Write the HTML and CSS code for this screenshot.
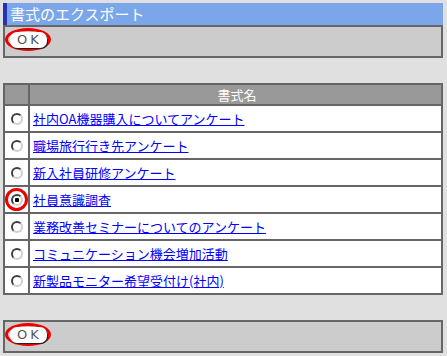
FILE: index.html
```html
<!DOCTYPE html>
<html lang="ja">
<head>
    <meta charset="UTF-8">
    <title>書式のエクスポート</title>
    <link rel="stylesheet" href="styles.css">
</head>
<body>

<div class="titleBar">書式のエクスポート</div>

<div class="okBox">
    <span class="mark markButton"><button type="button" class="okButton">OK</button></span>
</div>

<table class="formList">
    <tr>
        <th class="colRadio"></th>
        <th>書式名</th>
    </tr>
    <tr>
        <td class="colRadio"><span class="mark markNone"><input type="radio" name="fmt"></span></td>
        <td><a href="#">社内OA機器購入についてアンケート</a></td>
    </tr>
    <tr>
        <td class="colRadio"><span class="mark markNone"><input type="radio" name="fmt"></span></td>
        <td><a href="#">職場旅行行き先アンケート</a></td>
    </tr>
    <tr>
        <td class="colRadio"><span class="mark markNone"><input type="radio" name="fmt"></span></td>
        <td><a href="#">新入社員研修アンケート</a></td>
    </tr>
    <tr>
        <td class="colRadio"><span class="mark markRadio"><input type="radio" name="fmt" checked></span></td>
        <td><a href="#">社員意識調査</a></td>
    </tr>
    <tr>
        <td class="colRadio"><span class="mark markNone"><input type="radio" name="fmt"></span></td>
        <td><a href="#">業務改善セミナーについてのアンケート</a></td>
    </tr>
    <tr>
        <td class="colRadio"><span class="mark markNone"><input type="radio" name="fmt"></span></td>
        <td><a href="#">コミュニケーション機会増加活動</a></td>
    </tr>
    <tr>
        <td class="colRadio"><span class="mark markNone"><input type="radio" name="fmt"></span></td>
        <td><a href="#">新製品モニター希望受付け(社内)</a></td>
    </tr>
</table>

<div class="okBox">
    <span class="mark markButton"><button type="button" class="okButton">OK</button></span>
</div>

</body>
</html>
```

FILE: styles.css
```css
body {
    margin: 3px 4px 0 3px;
    background-color: #e0e0e0;
    font-family: "Noto Sans CJK JP", "Noto Sans", sans-serif;
}

.titleBar {
    height: 22px;
    line-height: 22px;
    background-color: #7ba6e9;
    border-left: 4px solid #2630b8;
    padding-left: 3px;
    color: white;
    font-size: 15px;
}

.okBox {
    box-sizing: border-box;
    height: 33px;
    background-color: #cccccc;
    border: 2px solid #666666;
    padding: 1px 0 0 0;
}

/* red annotation rings */
.mark {
    display: flex;
    align-items: center;
    justify-content: center;
    box-sizing: border-box;
    border-radius: 50%;
}

.markButton {
    width: 46px;
    height: 23px;
    border: 3px solid #ee0000;
}

.markRadio,
.markNone {
    width: 23px;
    height: 23px;
    margin: 0 auto;
    border: 3px solid #ee0000;
}

.markNone {
    border-color: transparent;
}

.okButton {
    width: 37px;
    height: 16px;
    padding: 0;
    border: none;
    border-radius: 7px;
    background-color: white;
    box-shadow: 1px 1px 0 #222222;
    color: #555555;
    font-family: "DejaVu Sans", sans-serif;
    font-size: 13px;
    line-height: 16px;
    letter-spacing: 3px;
    text-indent: 3px;
}

.formList {
    width: 100%;
    margin: 25px 0;
    border-collapse: collapse;
    background-color: white;
}

.formList th,
.formList td {
    border: 2px solid #666666;
    padding: 0 0 0 3px;
    text-align: left;
}

.formList th {
    height: 19px;
    background-color: #999999;
    color: white;
    font-weight: normal;
    font-size: 13px;
    text-align: center;
}

.formList td {
    height: 25px;
    font-size: 13px;
}

.formList .colRadio {
    width: 22px;
    padding: 0;
}

.formList a {
    color: #0000ff;
}

input[type="radio"] {
    appearance: none;
    -webkit-appearance: none;
    box-sizing: border-box;
    width: 12px;
    height: 12px;
    margin: 0;
    border: 2px solid;
    border-color: #404040 #d0d0d0 #d0d0d0 #404040;
    border-radius: 50%;
    background-color: white;
}

input[type="radio"]:checked {
    background: radial-gradient(circle, #000000 0, #000000 2px, white 2.5px);
}
```
